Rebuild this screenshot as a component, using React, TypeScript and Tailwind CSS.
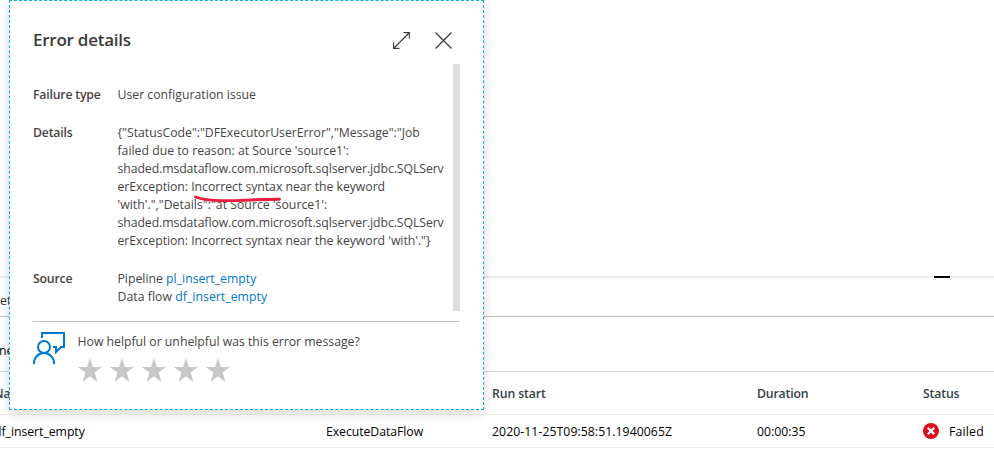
import React from "react";

const details: { text: string; track: string }[] = [
  { text: '{"StatusCode":"DFExecutorUserError","Message":"Job', track: "tracking-[-0.01px]" },
  { text: "failed due to reason: at Source 'source1':", track: "tracking-[0px]" },
  { text: "shaded.msdataflow.com.microsoft.sqlserver.jdbc.SQLServ", track: "tracking-[-0.08px]" },
  { text: "erException: Incorrect syntax near the keyword", track: "tracking-[-0.03px]" },
  { text: "'with'.\",\"Details\":\"at Source 'source1':", track: "tracking-[0.02px]" },
  { text: "shaded.msdataflow.com.microsoft.sqlserver.jdbc.SQLServ", track: "tracking-[-0.08px]" },
  { text: "erException: Incorrect syntax near the keyword 'with'.\"}", track: "tracking-[-0.03px]" },
];

function Star() {
  return (
    <svg width="24" height="24" viewBox="0 0 24 24" className="block" fill="#c8c6c4">
      <path d="M12 0 L14.9 9 H24 L16.7 14.6 L19.4 24 L12 18.3 L4.6 24 L7.3 14.6 L0 9 H9.1 Z" />
    </svg>
  );
}

function Activity() {
  return (
    <div className="flex h-[470px] flex-col overflow-hidden whitespace-nowrap text-black">
      <div className="h-[276px] shrink-0" />
      <div className="flex h-[2px] shrink-0 bg-[#ededed] pl-[934px]">
        <div className="h-[2px] w-4 bg-black" />
      </div>
      <div className="flex h-[39px] shrink-0 items-center border-b border-[#bebebe] pt-[8px] text-[#323130]">
        <span>et</span>
      </div>
      <div className="flex h-[55px] shrink-0 items-center border-b border-[#d6d6d6] pt-[14px]">
        <span className="-ml-[1px]">ne</span>
      </div>
      <div className="flex h-[43px] shrink-0 items-center border-b border-[#eeeeee] pt-[2px] font-semibold text-[#323f4b]">
        <span className="-ml-[6px] w-[498px]">Name</span>
        <span className="w-[265px] tracking-[-0.1px]">Run start</span>
        <span className="w-[166px] tracking-[-0.15px]">Duration</span>
        <span className="tracking-[-0.15px]">Status</span>
      </div>
      <div className="flex h-[33px] shrink-0 items-center border-b border-[#eeeeee]">
        <span className="-ml-[6px] w-[332px] pt-[2px] tracking-[-0.03px]">df_insert_empty</span>
        <span className="w-[166px] pt-[2px] tracking-[-0.05px]">ExecuteDataFlow</span>
        <span className="w-[265px] pt-[2px] tracking-[0.06px]">2020-11-25T09:58:51.1940065Z</span>
        <span className="w-[166px] pt-[2px]">00:00:35</span>
        <svg width="16" height="16" viewBox="0 0 16 16" className="mr-[10px]">
          <circle cx="8" cy="8" r="8" fill="#e00b1c" />
          <path d="M4.7 4.7 L11.3 11.3 M11.3 4.7 L4.7 11.3" stroke="#fff" strokeWidth="2.2" />
        </svg>
        <span className="pt-[2px] tracking-[0.2px]">Failed</span>
      </div>
    </div>
  );
}

function ErrorPanel() {
  return (
    <div className="absolute left-[9px] top-0 flex h-[410px] w-[475px] flex-col whitespace-nowrap border border-dashed border-[#00b0ea] bg-white pl-[23px] pr-[23px] text-[#464443] shadow-[0_3px_10px_rgba(0,0,0,0.16)]">
      <div className="flex h-[63px] shrink-0 items-center pt-[16px] pr-[8px]">
        <h1 className="-mt-[2px] flex-1 text-[17px] font-semibold leading-6 tracking-[-0.25px] text-[#3b3a39]">Error details</h1>
        <svg width="17" height="17" viewBox="0 0 17 17" fill="none" stroke="#3b3a39" strokeWidth="1.1" className="mr-[25px]">
          <path d="M1 16 L16 1 M10.5 .6 H16.4 V6.5 M.6 10.5 V16.4 H6.5" />
        </svg>
        <svg width="17" height="17" viewBox="0 0 17 17" fill="none" stroke="#3b3a39" strokeWidth="1.2">
          <path d="M.5 .5 L16.5 16.5 M16.5 .5 L.5 16.5" />
        </svg>
      </div>
      <div className="flex h-[247px] shrink-0 leading-[18px]">
        <div className="flex flex-1 flex-col gap-5 pt-[22px]">
          <div className="flex">
            <b className="w-[84.5px] font-semibold tracking-[-0.18px]">Failure type</b>
            <span>User configuration issue</span>
          </div>
          <div className="flex">
            <b className="w-[84.5px] font-semibold tracking-[-0.18px]">Details</b>
            <div className="flex flex-col">
              {details.map((line, i) => (
                <span key={i} className={line.track}>{line.text}</span>
              ))}
            </div>
          </div>
          <div className="flex">
            <b className="w-[84.5px] font-semibold tracking-[-0.18px]">Source</b>
            <div className="flex flex-col">
              <span>Pipeline <a className="text-[#0078d4]">pl_insert_empty</a></span>
              <span className="tracking-[0.04px]">Data flow <a className="text-[#0078d4]">df_insert_empty</a></span>
            </div>
          </div>
        </div>
        <div className="-ml-[7px] w-[7px] shrink-0 bg-[#dedede]" />
      </div>
      <div className="mt-[10px] flex border-t border-[#c4c4c4] pt-[10px]">
        <svg width="32" height="32" viewBox="0 0 32 32" fill="none" stroke="#0078d4" strokeWidth="2" className="mr-[12.5px]">
          <path d="M9 6 V1 H31 V15 H28 L23 20 V15 H20" />
          <circle cx="11" cy="15" r="6" />
          <path d="M1 32 V31 A10 10 0 0 1 21 31 V32" />
        </svg>
        <div className="flex flex-col">
          <span className="pt-[1px] leading-[18px] tracking-[-0.01px]">How helpful or unhelpful was this error message?</span>
          <div className="mt-[7px] flex gap-2">
            <Star /><Star /><Star /><Star /><Star />
          </div>
        </div>
      </div>
      <svg className="absolute left-[180px] top-[190px]" width="96" height="16" viewBox="0 0 96 16" fill="none">
        <path d="M5.500 6 C12 8.500 20 9.500 32 9.600 L45 9.600 C58 9 72 8.400 89.500 8.200" stroke="#ee1c3c" strokeWidth="2.9" strokeLinecap="round" />
      </svg>
    </div>
  );
}

export default function App() {
  return (
    <div className="relative h-[470px] w-[994px] overflow-hidden bg-white font-['Open_Sans','Noto_Sans',sans-serif] text-[12.25px]">
      <Activity />
      <ErrorPanel />
    </div>
  );
}
